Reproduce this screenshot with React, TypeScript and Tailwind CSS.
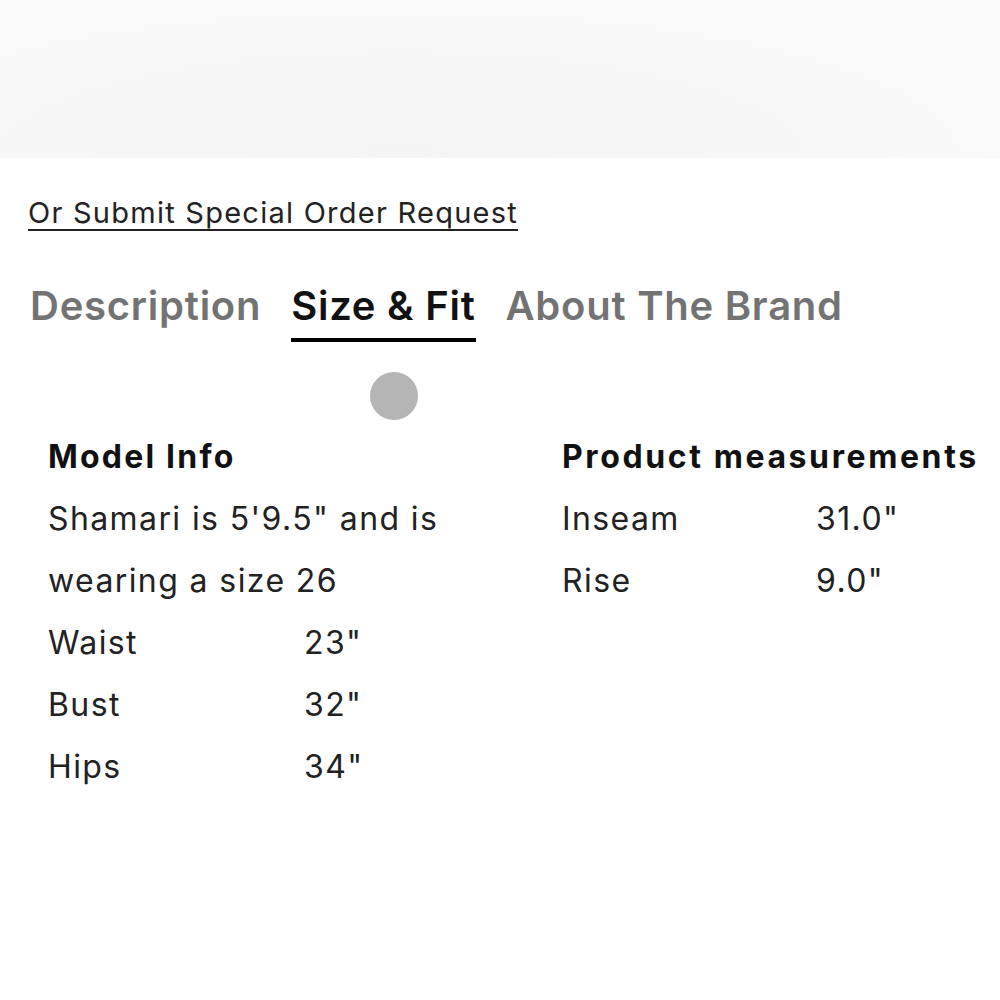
export default function App() {
  const model = [
    ['Waist', '23"'],
    ['Bust', '32"'],
    ['Hips', '34"'],
  ];
  const product = [
    ['Inseam', '31.0"'],
    ['Rise', '9.0"'],
  ];

  return (
    <div className="w-[1000px] h-[1000px] bg-white overflow-hidden font-['Inter','Liberation_Sans',sans-serif] text-[#222]">
      <div className="h-[158px] bg-[radial-gradient(ellipse_at_40%_100%,#f4f4f4,#f8f8f8_50%,#fbfbfb)]" />

      <div className="pl-[28px] pt-[38px] h-[62px] flex items-start">
        <a className="text-[29px] leading-[34px] tracking-[1.25px] underline underline-offset-[6px] decoration-[2px] text-[#222]">
          Or Submit Special Order Request
        </a>
      </div>

      {/* tabs */}
      <div className="flex items-start gap-[30px] pl-[30px] mt-[63px] text-[40px] leading-[46px] font-semibold tracking-[0.75px]">
        <div className="text-[#737373]">Description</div>
        <div className="flex flex-col">
          <span className="text-[#111]">Size &amp; Fit</span>
          <span className="h-[4px] bg-black mt-[9px]" />
        </div>
        <div className="text-[#737373]">About The Brand</div>
      </div>

      <div className="flex justify-start pl-[370px] mt-[30px]">
        <div className="w-[48px] h-[48px] rounded-full bg-[#b5b5b5]" />
      </div>

      <div className="flex pl-[48px] mt-[6px] text-[32px] leading-[62px] tracking-[1.4px]">
        <div className="w-[514px]">
          <div className="font-bold text-[#111] tracking-[2.2px]">Model Info</div>
          <div className="w-[420px]">Shamari is 5'9.5" and is wearing a size 26</div>
          {model.map(([k, v]) => (
            <div key={k} className="flex">
              <span className="w-[256px]">{k}</span>
              <span>{v}</span>
            </div>
          ))}
        </div>
        <div>
          <div className="font-bold text-[#111] whitespace-nowrap tracking-[2.6px]">Product measurements</div>
          {product.map(([k, v]) => (
            <div key={k} className="flex">
              <span className="w-[254px]">{k}</span>
              <span>{v}</span>
            </div>
          ))}
        </div>
      </div>
    </div>
  );
}
